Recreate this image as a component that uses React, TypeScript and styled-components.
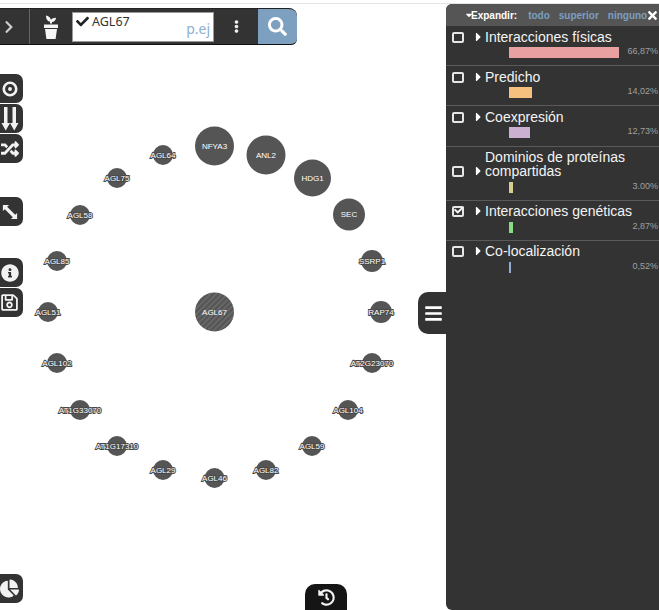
import * as React from "react";
import styled, { createGlobalStyle } from "styled-components";
import { FaCheck, FaSearch, FaEllipsisV, FaChevronRight, FaRandom, FaInfoCircle, FaRegSave, FaChartPie, FaHistory, FaBars, FaTimes, FaCaretRight, FaCaretDown } from "react-icons/fa";

const GlobalStyle = createGlobalStyle`
  html, body {
    margin: 0;
    height: 100%;
    background: #fff;
    overflow: hidden;
  }
  #root {
    height: 100%;
  }
`;

const Page = styled.div`
  position: relative;
  width: 659px;
  height: 610px;
  padding-top: 4px;
  box-sizing: border-box;
  display: flex;
  font-family: "Liberation Sans", Arial, sans-serif;
  &::before {
    content: "";
    position: absolute;
    top: 3px;
    left: 0;
    right: 0;
    height: 1px;
    background: #e4e4e4;
  }
`;

const Canvas = styled.div`
  position: relative;
  flex: 1;
  min-width: 0;
`;

const Toolbar = styled.div`
  position: absolute;
  top: 4px;
  left: 0;
  width: 297px;
  height: 37px;
  display: flex;
  align-items: stretch;
  background: #333;
  border-bottom: 1px solid #111;
  border-top: 1px solid #222;
  box-sizing: border-box;
  border-radius: 0 8px 6px 0;
  overflow: hidden;
`;

const ExpandCell = styled.div`
  width: 30px;
  border-right: 1px solid #666;
  color: #ccc;
  display: flex;
  align-items: center;
  font-size: 14px;
  padding-left: 2px;
  box-sizing: border-box;
`;

const PlantCell = styled.div`
  width: 42px;
  display: flex;
  align-items: center;
  justify-content: center;
`;

const SearchBox = styled.div`
  position: relative;
  width: 142px;
  height: 30px;
  margin-top: 3px;
  background: #fff;
  border: 1px solid #999;
  box-sizing: border-box;
  display: flex;
  align-items: flex-start;
  gap: 3px;
  padding: 0 3px;
  font-family: "Noto Sans", sans-serif;
  font-size: 12.5px;
  line-height: 17px;
  color: #333;
`;

const CheckMark = styled(FaCheck)`
  margin-top: 2px;
  font-size: 13px;
  color: #222;
`;

const Example = styled.span`
  position: absolute;
  right: 3px;
  bottom: 2px;
  font-size: 14px;
  line-height: 20px;
  color: #8db0d2;
`;

const MoreCell = styled.div`
  width: 44px;
  color: #eee;
  font-size: 13px;
  display: flex;
  align-items: center;
  justify-content: center;
`;

const SearchButton = styled.div`
  flex: 1;
  background: #7d9fc0;
  color: #fff;
  font-size: 19px;
  display: flex;
  align-items: center;
  justify-content: center;
`;

const ToolColumn = styled.div`
  position: absolute;
  top: 0;
  left: 0;
  width: 23px;
  padding-top: 70px;
  display: flex;
  flex-direction: column;
`;

const ToolGroup = styled.div<{ $gap?: number }>`
  margin-top: ${(p) => p.$gap ?? 0}px;
  display: flex;
  flex-direction: column;
  gap: 1px;
`;

const ToolButton = styled.div<{ $size?: number }>`
  width: 23px;
  height: 29px;
  padding-right: 4px;
  background: #333;
  border-radius: 0 7px 7px 0;
  color: #f2f2f2;
  font-size: ${(p) => p.$size ?? 18}px;
  display: flex;
  align-items: center;
  justify-content: center;
  overflow: hidden;
  box-sizing: border-box;
`;

const HistoryTab = styled.div`
  position: absolute;
  left: 305px;
  bottom: 0;
  width: 42px;
  height: 26px;
  background: #151515;
  border-radius: 10px 10px 0 0;
  color: #f2f2f2;
  font-size: 17px;
  display: flex;
  align-items: center;
  justify-content: center;
`;

const PanelTab = styled.div`
  position: absolute;
  right: 0;
  top: 288px;
  width: 28px;
  height: 42px;
  background: #333;
  border-radius: 10px 0 0 10px;
  color: #fff;
  font-size: 19px;
  display: flex;
  align-items: center;
  justify-content: center;
  padding-left: 2px;
  box-sizing: border-box;
`;

const Graph = styled.svg`
  position: absolute;
  left: 0;
  top: -4px;
  width: 446px;
  height: 610px;
`;

const NodeLabel = styled.text<{ $big: boolean }>`
  font-family: "Liberation Sans", Arial, sans-serif;
  font-size: 8px;
  text-anchor: middle;
  dominant-baseline: central;
  fill: #fff;
  paint-order: stroke;
  stroke: ${(p) => (p.$big ? "none" : "#484848")};
  stroke-width: 1.8px;
`;

const Panel = styled.aside`
  width: 213px;
  flex-shrink: 0;
  background: #333;
  color: #fff;
  border-radius: 6px 0 0 6px;
`;

const PanelHeader = styled.div`
  position: relative;
  height: 22px;
  background: #555;
  border-radius: 6px 0 0 0;
  display: flex;
  align-items: center;
  font-size: 10px;
  font-weight: bold;
  padding-left: 18px;
  box-sizing: border-box;
`;

const HeaderTitle = styled.span`
  display: flex;
  align-items: center;
  margin-right: 11px;
  svg {
    margin-right: -3px;
  }
`;

const HeaderLink = styled.span`
  color: #7d9fc0;
  margin-right: 9px;
`;

const CloseIcon = styled.span`
  position: absolute;
  right: 0;
  top: 5px;
  font-size: 13px;
  display: flex;
`;

const Row = styled.div<{ $height: number; $top: number }>`
  height: ${(p) => p.$height}px;
  padding-top: ${(p) => p.$top}px;
  border-bottom: 1px solid #5a5a5a;
  box-sizing: border-box;
  &:last-child {
    border-bottom: none;
  }
`;

const RowHead = styled.div`
  display: flex;
  align-items: flex-end;
`;

const CheckBox = styled.span`
  position: relative;
  width: 12px;
  height: 11px;
  margin: 0 11px 1px 6px;
  border: 2px solid #e6e6e6;
  border-radius: 2px;
  box-sizing: border-box;
  flex-shrink: 0;
`;

const CheckTick = styled(FaCheck)`
  position: absolute;
  left: 0;
  top: -3px;
  font-size: 10px;
  color: #f2f2f2;
`;

const Caret = styled.span`
  width: 10px;
  height: 14px;
  flex-shrink: 0;
  font-size: 14px;
  display: flex;
  align-items: center;
  svg {
    margin-left: -3px;
  }
`;

const RowTitle = styled.span`
  font-size: 14px;
  line-height: 14px;
  color: #f4f4f4;
`;

const BarLine = styled.div<{ $top: number }>`
  margin-top: ${(p) => 7 - p.$top}px;
  display: flex;
  align-items: flex-start;
  justify-content: space-between;
  padding: 0 1px 0 63px;
`;

const Bar = styled.div`
  height: 11px;
`;

const Percent = styled.span`
  margin-top: -1px;
  font-size: 9px;
  line-height: 10px;
  color: #a0a0a0;
`;

type NodeData = [string, number, number, number];

const nodes: NodeData[] = [
  ["NFYA3", 214.5, 146, 19.5],
  ["ANL2", 266, 155, 19.5],
  ["HDG1", 312.5, 178, 18.5],
  ["SEC", 349, 214.5, 16],
  ["SSRP1", 372, 261, 11],
  ["RAP74", 381, 312, 11],
  ["AT2G23070", 372, 363, 10],
  ["AGL104", 348, 410, 10],
  ["AGL59", 312, 446, 10],
  ["AGL82", 266, 470, 10],
  ["AGL46", 214.5, 478, 10],
  ["AGL29", 163, 470, 10],
  ["AT1G17310", 117, 446, 10],
  ["AT1G33070", 80, 410, 10],
  ["AGL102", 57, 363, 10],
  ["AGL51", 48, 312, 10],
  ["AGL85", 57, 261, 10],
  ["AGL58", 80, 215, 10],
  ["AGL75", 117, 178, 10],
  ["AGL64", 163, 155, 10],
];

type RowData = {
  title: React.ReactNode;
  height: number;
  top: number;
  color: string;
  width: number;
  percent: string;
  checked?: boolean;
};

const rows: RowData[] = [
  { title: "Interacciones físicas", height: 40, top: 4, color: "#e9a0a0", width: 110, percent: "66,87%" },
  { title: "Predicho", height: 40, top: 4, color: "#f5c07e", width: 23, percent: "14,02%" },
  { title: "Coexpresión", height: 41, top: 4, color: "#cbb0d2", width: 21, percent: "12,73%" },
  { title: <>Dominios de proteínas<br />compartidas</>, height: 54, top: 3, color: "#d6cd92", width: 4, percent: "3.00%" },
  { title: "Interacciones genéticas", height: 40, top: 3, color: "#88dc88", width: 4, percent: "2,87%", checked: true },
  { title: "Co-localización", height: 40, top: 3, color: "#92acd6", width: 2, percent: "0,52%" },
];

const TargetIcon = () => (
  <svg width="16" height="16" viewBox="0 0 18 18">
    <circle cx="9" cy="9" r="7" fill="none" stroke="#f2f2f2" strokeWidth="3" />
    <circle cx="9" cy="9" r="2.2" fill="#f2f2f2" />
  </svg>
);

const DownArrowsIcon = () => (
  <svg width="18" height="24" viewBox="0 0 18 24">
    <path d="M3 0h3.500v16H9l-4.250 7.500L.5 16H3z M11.500 0H15v16h2.500l-4.250 7.500L9 16h2.500z" fill="#f2f2f2" />
  </svg>
);

const ResizeIcon = () => (
  <svg width="16" height="16" viewBox="0 0 18 18">
    <path d="M1 1h7L5.800 3.200l9 9L17 10v7h-7l2.200-2.200-9-9L1 8z" fill="#f2f2f2" />
  </svg>
);

const PlantIcon = () => (
  <svg width="16" height="26" viewBox="0 0 16 26">
    <path d="M1 10.500h14v3.500H1z M2 15h12l-1.400 10H3.400z M7 9.500V7.500C5 7.500 3 5.500 3 1.500 5.500 2 7.500 3.500 8 6 8.500 4.800 10 3.800 13 3.800 13 6.500 11 8 9 8v1.500z" fill="#f6f6f6" />
  </svg>
);

const App = () => (
  <Page>
    <GlobalStyle />
    <Canvas>
      <Graph viewBox="0 0 446 610">
        <defs>
          <pattern id="hatch" width="4" height="4" patternUnits="userSpaceOnUse" patternTransform="rotate(45)">
            <rect width="4" height="4" fill="#555" />
            <rect width="1.5" height="4" fill="#6c6c6c" />
          </pattern>
        </defs>
        <circle cx={214.5} cy={312} r={19.5} fill="url(#hatch)" />
        <NodeLabel x={214.5} y={312} $big>AGL67</NodeLabel>
        {nodes.map(([name, x, y, r]) => (
          <g key={name}>
            <circle cx={x} cy={y} r={r} fill="#555" />
            <NodeLabel x={x} y={y} $big={r > 15}>{name}</NodeLabel>
          </g>
        ))}
      </Graph>
      <Toolbar>
        <ExpandCell><FaChevronRight /></ExpandCell>
        <PlantCell><PlantIcon /></PlantCell>
        <SearchBox>
          <CheckMark />
          AGL67
          <Example>p.ej</Example>
        </SearchBox>
        <MoreCell><FaEllipsisV /></MoreCell>
        <SearchButton><FaSearch /></SearchButton>
      </Toolbar>
      <ToolColumn>
        <ToolGroup>
          <ToolButton><TargetIcon /></ToolButton>
          <ToolButton><DownArrowsIcon /></ToolButton>
          <ToolButton><FaRandom /></ToolButton>
        </ToolGroup>
        <ToolGroup $gap={34}>
          <ToolButton><ResizeIcon /></ToolButton>
        </ToolGroup>
        <ToolGroup $gap={32}>
          <ToolButton $size={18}><FaInfoCircle /></ToolButton>
          <ToolButton $size={19}><FaRegSave /></ToolButton>
        </ToolGroup>
        <ToolGroup $gap={257}>
          <ToolButton $size={19}><FaChartPie /></ToolButton>
        </ToolGroup>
      </ToolColumn>
      <HistoryTab><FaHistory /></HistoryTab>
      <PanelTab><FaBars /></PanelTab>
    </Canvas>
    <Panel>
      <PanelHeader>
        <HeaderTitle><FaCaretDown />Expandir:</HeaderTitle>
        <HeaderLink>todo</HeaderLink>
        <HeaderLink>superior</HeaderLink>
        <HeaderLink>ninguno</HeaderLink>
        <CloseIcon><FaTimes /></CloseIcon>
      </PanelHeader>
      {rows.map((row, i) => (
        <Row key={i} $height={row.height} $top={row.top}>
          <RowHead>
            <CheckBox>{row.checked && <CheckTick />}</CheckBox>
            <Caret><FaCaretRight /></Caret>
            <RowTitle>{row.title}</RowTitle>
          </RowHead>
          <BarLine $top={row.top}>
            <Bar style={{ width: row.width, background: row.color }} />
            <Percent>{row.percent}</Percent>
          </BarLine>
        </Row>
      ))}
    </Panel>
  </Page>
);

export default App;
